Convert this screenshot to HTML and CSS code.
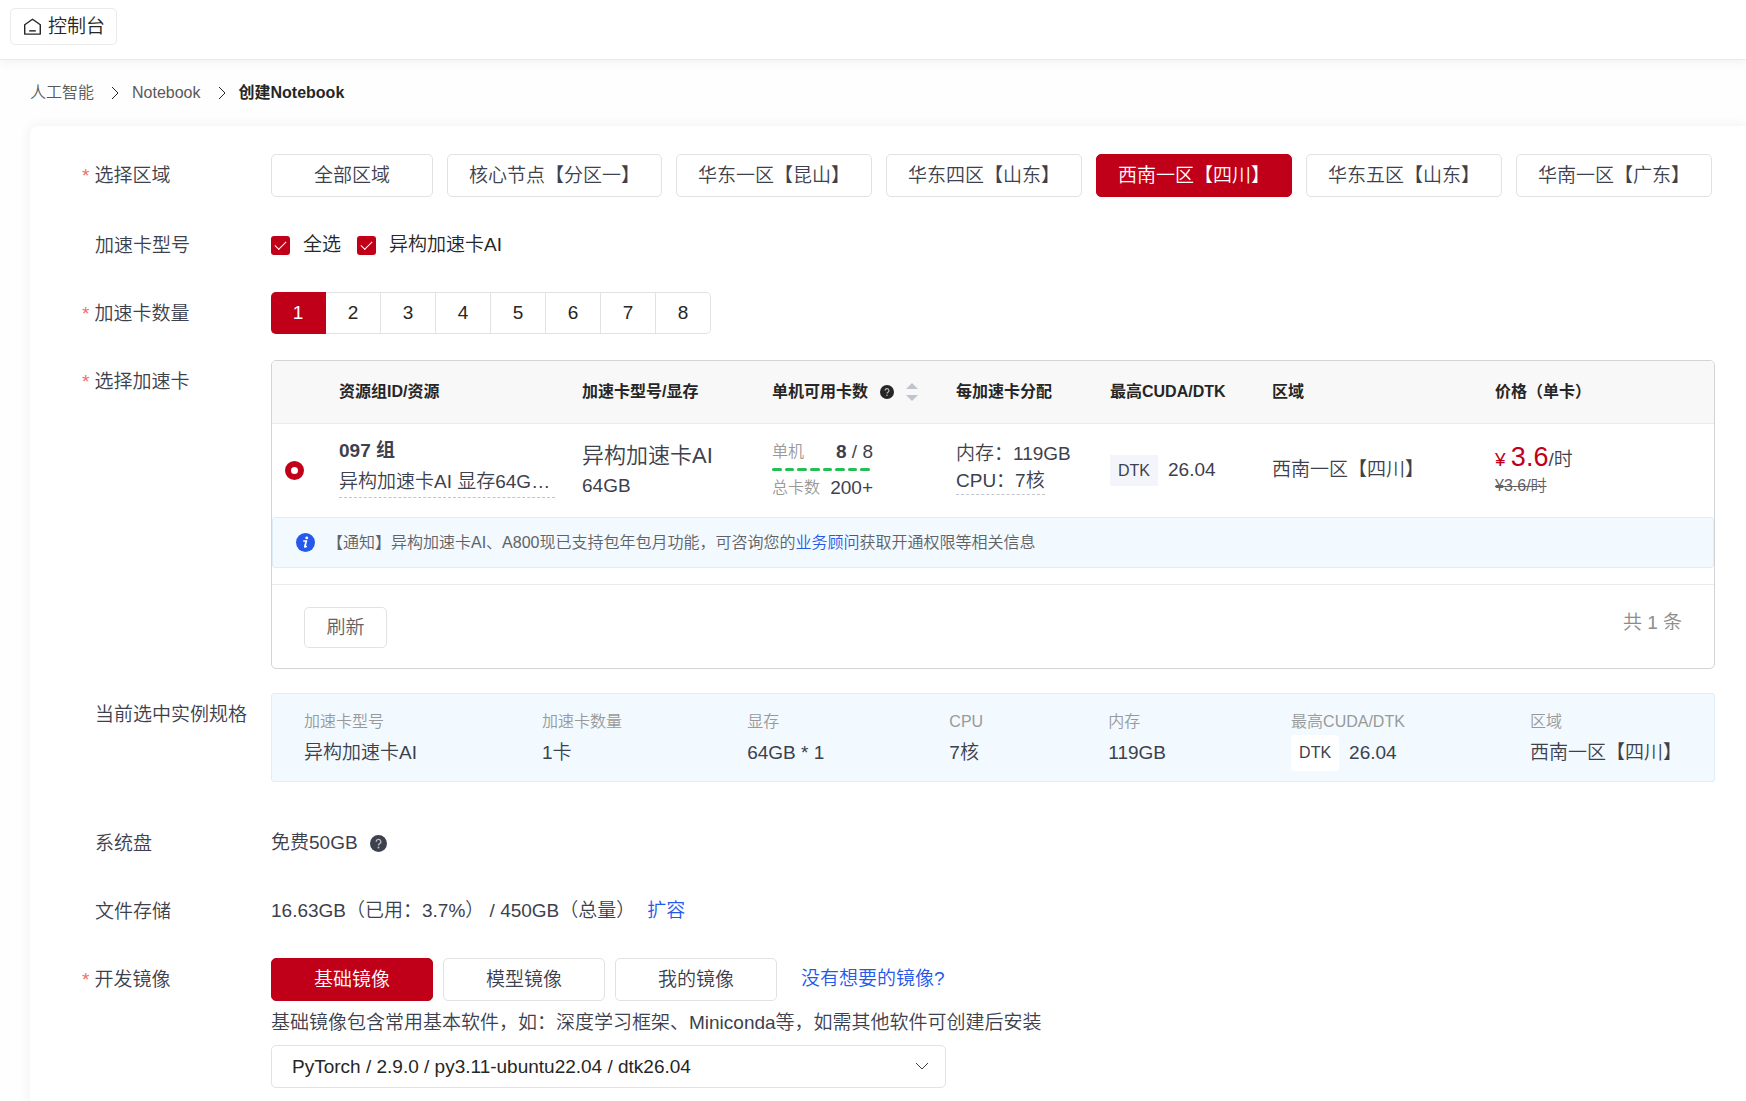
FILE: index.html
```html
<!DOCTYPE html>
<html lang="zh-CN">
<head>
    <meta charset="UTF-8">
    <meta name="viewport" content="width=device-width, initial-scale=1.0">
    <title>创建Notebook</title>
    <link rel="stylesheet" href="styles.css">
</head>
<body>
    <header class="topbar">
        <a href="#" class="console-btn">
            <svg class="icon-home" viewBox="0 0 20 20" fill="none" stroke="currentColor" stroke-width="1.5" stroke-linejoin="round">
                <path d="M1.8 8.2 10 2.4l8.2 5.8v9.8H1.8z"/>
                <path d="M6.5 14.6h7"/>
            </svg>
            控制台
        </a>
    </header>

    <nav class="breadcrumb">
        <a href="#">人工智能</a>
        <svg class="icon-sep" viewBox="0 0 8 14" fill="none" stroke="currentColor"><path d="M1 1l6 6-6 6"/></svg>
        <a href="#">Notebook</a>
        <svg class="icon-sep" viewBox="0 0 8 14" fill="none" stroke="currentColor"><path d="M1 1l6 6-6 6"/></svg>
        <span class="current">创建Notebook</span>
    </nav>

    <main class="card">
        <div class="form-item item-region">
            <div class="label required">选择区域</div>
            <div class="content btn-row region-row">
                <button type="button" class="btn">全部区域</button>
                <button type="button" class="btn">核心节点【分区一】</button>
                <button type="button" class="btn">华东一区【昆山】</button>
                <button type="button" class="btn">华东四区【山东】</button>
                <button type="button" class="btn active">西南一区【四川】</button>
                <button type="button" class="btn">华东五区【山东】</button>
                <button type="button" class="btn">华南一区【广东】</button>
            </div>
        </div>

        <div class="form-item">
            <div class="label">加速卡型号</div>
            <div class="content check-row">
                <label class="check"><input type="checkbox" checked>全选</label>
                <label class="check"><input type="checkbox" checked>异构加速卡AI</label>
            </div>
        </div>

        <div class="form-item">
            <div class="label required">加速卡数量</div>
            <div class="content">
                <div class="count-group">
                    <button type="button" class="active">1</button>
                    <button type="button">2</button>
                    <button type="button">3</button>
                    <button type="button">4</button>
                    <button type="button">5</button>
                    <button type="button">6</button>
                    <button type="button">7</button>
                    <button type="button">8</button>
                </div>
            </div>
        </div>

        <div class="form-item item-table">
            <div class="label required">选择加速卡</div>
            <div class="content table-box">
                <table class="card-table">
                    <colgroup>
                        <col class="col-radio">
                        <col class="col-group">
                        <col class="col-model">
                        <col class="col-avail">
                        <col class="col-alloc">
                        <col class="col-cuda">
                        <col class="col-region">
                        <col>
                    </colgroup>
                    <thead>
                        <tr>
                            <th></th>
                            <th>资源组ID/资源</th>
                            <th>加速卡型号/显存</th>
                            <th>
                                <div class="th-flex">
                                    单机可用卡数
                                    <svg class="icon-help icon-help-sm" viewBox="0 0 16 16">
                                        <circle cx="8" cy="8" r="8" fill="currentColor"/>
                                        <path d="M5.8 6.3a2.2 2.2 0 1 1 3.3 1.9c-.8.4-1.1.8-1.1 1.6" fill="none" stroke="#bbb" stroke-width="1.3"/>
                                        <circle cx="8" cy="11.8" r=".9" fill="#bbb"/>
                                    </svg>
                                    <svg class="icon-sort" viewBox="0 0 12 18" fill="#c0c4cc">
                                        <path d="M6 0l6 6H0zM6 18l-6-6h12z"/>
                                    </svg>
                                </div>
                            </th>
                            <th>每加速卡分配</th>
                            <th>最高CUDA/DTK</th>
                            <th>区域</th>
                            <th>价格（单卡）</th>
                        </tr>
                    </thead>
                    <tbody>
                        <tr>
                            <td class="cell-radio"><input type="radio" name="group" aria-label="097 组" checked></td>
                            <td class="cell-lines">
                                <div class="group-name">097 组</div>
                                <div class="group-desc">异构加速卡AI 显存64G…</div>
                            </td>
                            <td>
                                <div class="model-name">异构加速卡AI</div>
                                <div class="model-mem">64GB</div>
                            </td>
                            <td>
                                <div class="avail">
                                    <div class="avail-line"><span>单机</span><div><b>8</b> / 8</div></div>
                                    <div class="avail-bar"><i></i><i></i><i></i><i></i><i></i><i></i><i></i><i></i></div>
                                    <div class="avail-line"><span>总卡数</span><div>200+</div></div>
                                </div>
                            </td>
                            <td class="cell-lines">
                                <div class="alloc-line">内存：119GB</div>
                                <div class="alloc-line dashed">CPU：7核</div>
                            </td>
                            <td><div class="dtk"><span class="tag">DTK</span>26.04</div></td>
                            <td>西南一区【四川】</td>
                            <td class="cell-price">
                                <div class="price"><span class="yen">¥</span> <span class="num">3.6</span>/时</div>
                                <del class="price-old">¥3.6/时</del>
                            </td>
                        </tr>
                    </tbody>
                </table>
                <div class="notice">
                    <svg class="icon-info" viewBox="0 0 20 20">
                        <circle cx="10" cy="10" r="10" fill="#2459eb"/>
                        <circle cx="11.3" cy="5.2" r="1.5" fill="#fff"/>
                        <path d="M7.6 8.4h3.2L9.3 14.2q-.2 1.2 2 -.4" fill="none" stroke="#fff" stroke-width="1.8"/>
                    </svg>
                    <p>【通知】异构加速卡AI、A800现已支持包年包月功能，可咨询您的<a href="#">业务顾问</a>获取开通权限等相关信息</p>
                </div>
                <div class="table-footer">
                    <button type="button" class="btn btn-refresh">刷新</button>
                    <span class="total">共 1 条</span>
                </div>
            </div>
        </div>

        <div class="form-item item-spec">
            <div class="label">当前选中实例规格</div>
            <dl class="content spec">
                <div><dt>加速卡型号</dt><dd>异构加速卡AI</dd></div>
                <div><dt>加速卡数量</dt><dd>1卡</dd></div>
                <div><dt>显存</dt><dd>64GB * 1</dd></div>
                <div><dt>CPU</dt><dd>7核</dd></div>
                <div><dt>内存</dt><dd>119GB</dd></div>
                <div><dt>最高CUDA/DTK</dt><dd class="dtk"><span class="tag">DTK</span>26.04</dd></div>
                <div><dt>区域</dt><dd>西南一区【四川】</dd></div>
            </dl>
        </div>

        <div class="form-item">
            <div class="label">系统盘</div>
            <div class="content text-row">
                <span>免费50GB</span>
                <svg class="icon-help" viewBox="0 0 16 16">
                    <circle cx="8" cy="8" r="8" fill="currentColor"/>
                    <path d="M5.8 6.3a2.2 2.2 0 1 1 3.3 1.9c-.8.4-1.1.8-1.1 1.6" fill="none" stroke="#bbb" stroke-width="1.3"/>
                    <circle cx="8" cy="11.8" r=".9" fill="#bbb"/>
                </svg>
            </div>
        </div>

        <div class="form-item">
            <div class="label">文件存储</div>
            <div class="content text-row">
                <span>16.63GB（已用：3.7%） / 450GB（总量）</span>
                <a href="#">扩容</a>
            </div>
        </div>

        <div class="form-item">
            <div class="label required">开发镜像</div>
            <div class="content">
                <div class="btn-row image-row">
                    <button type="button" class="btn active">基础镜像</button>
                    <button type="button" class="btn">模型镜像</button>
                    <button type="button" class="btn">我的镜像</button>
                    <a href="#">没有想要的镜像?</a>
                </div>
                <p class="tip">基础镜像包含常用基本软件，如：深度学习框架、Miniconda等，如需其他软件可创建后安装</p>
                <div class="select-wrap">
                    <select aria-label="基础镜像">
                        <option>PyTorch / 2.9.0 / py3.11-ubuntu22.04 / dtk26.04</option>
                    </select>
                    <svg class="icon-arrow" viewBox="0 0 14 8" fill="none" stroke="currentColor"><path d="M1 1l6 6 6-6"/></svg>
                </div>
            </div>
        </div>
    </main>
</body>
</html>
```

FILE: styles.css
```css
* {
    margin: 0;
    padding: 0;
    box-sizing: border-box;
}

body {
    font-family: "Liberation Sans", "Noto Sans CJK SC", sans-serif;
    font-size: 19px;
    font-weight: 350;
    line-height: 42px;
    color: #3d414d;
    background-color: #fefefe;
}

a {
    color: #2459eb;
    text-decoration: none;
}

b {
    font-weight: bold;
}

button,
select {
    font: inherit;
    color: inherit;
}

button {
    cursor: pointer;
}

/* Top bar */
.topbar {
    height: 60px;
    padding: 8px 10px;
    background-color: #fff;
    border-bottom: 1px solid #ebebeb;
    box-shadow: 0 2px 10px rgba(0, 0, 0, 0.06);
}

.console-btn {
    display: inline-flex;
    align-items: center;
    gap: 6px;
    height: 37px;
    padding: 0 11px 0 12px;
    border: 1px solid #ebebeb;
    border-radius: 5px;
    color: #262626;
}

.icon-home {
    width: 19px;
    height: 19px;
}

/* Breadcrumb */
.breadcrumb {
    display: flex;
    align-items: center;
    gap: 13px;
    padding: 22px 30px;
    font-size: 16px;
    line-height: 22px;
    color: #262626;
}

.breadcrumb a {
    color: #595959;
}

.breadcrumb .current {
    font-weight: bold;
}

.icon-sep {
    width: 8px;
    height: 14px;
    margin-left: 4px;
}

/* Form card */
.card {
    margin-left: 30px;
    padding: 28px 31px 14px 51px;
    min-height: calc(100vh - 126px);
    background-color: #fff;
    border-top-left-radius: 8px;
    box-shadow: 0 0 12px rgba(60, 60, 120, 0.08);
}

.form-item {
    display: flex;
    margin-bottom: 26px;
}

.item-region {
    margin-bottom: 27px;
}

.item-table {
    margin-bottom: 24px;
}

.item-spec {
    margin-bottom: 40px;
}

.form-item:last-child {
    margin-bottom: 0;
}

.label {
    flex: 0 0 190px;
    height: 42px;
    padding-left: 14px;
    line-height: 44px;
}

.label.required {
    padding-left: 1px;
}

.label.required::before {
    content: "*";
    margin-right: 5px;
    color: #f56c6c;
}

.content {
    flex: 1;
    min-width: 0;
}

/* Buttons */
.btn-row {
    display: flex;
    flex-wrap: wrap;
}

.region-row {
    gap: 14px;
}

.image-row {
    gap: 10px;
}

.image-row a {
    margin-left: 14px;
}

.btn {
    min-width: 162px;
    height: 43px;
    padding: 0 21px;
    line-height: 38px;
    white-space: nowrap;
    background-color: #fff;
    border: 1px solid #e2e2e4;
    border-radius: 5px;
}

.btn.active {
    color: #fff;
    background-color: #c00018;
    border-color: #c00018;
}

/* Checkboxes */
.check-row {
    display: flex;
    gap: 16px;
}

.check {
    display: flex;
    align-items: center;
    gap: 13px;
    color: #262626;
}

.check input {
    appearance: none;
    display: grid;
    place-items: center;
    width: 19px;
    height: 19px;
    background-color: #c00018;
    border-radius: 3px;
}

.check input::after {
    content: "";
    width: 10px;
    height: 5px;
    margin-bottom: 3px;
    border: solid #fff;
    border-width: 0 0 1px 1px;
    transform: rotate(-45deg);
}

/* Card count */
.count-group {
    display: inline-flex;
    vertical-align: top;
}

.count-group button {
    width: 55px;
    height: 42px;
    line-height: 40px;
    color: #262626;
    background-color: #fff;
    border: 1px solid #e2e2e4;
    border-left-width: 0;
}

.count-group button.active {
    color: #fff;
    background-color: #c00018;
    border-color: #c00018;
    border-radius: 5px 0 0 5px;
}

.count-group button:last-child {
    border-radius: 0 5px 5px 0;
}

/* Accelerator table */
.table-box {
    border: 1px solid #d4d4d4;
    border-radius: 5px;
    overflow: hidden;
}

.card-table {
    width: 100%;
    table-layout: fixed;
    border-collapse: collapse;
    line-height: 28px;
}

.col-radio { width: 57px; }
.col-group { width: 243px; }
.col-model { width: 190px; }
.col-avail { width: 184px; }
.col-alloc { width: 154px; }
.col-cuda { width: 162px; }
.col-region { width: 223px; }

.card-table th,
.card-table td {
    padding: 0 10px;
    text-align: left;
    white-space: nowrap;
}

.card-table th {
    height: 62px;
    font-size: 16px;
    color: #262626;
    background-color: #f8f8f8;
    border-bottom: 1px solid #ebebeb;
}

.card-table td {
    height: 94px;
}

.th-flex {
    display: flex;
    align-items: center;
    gap: 12px;
}

.icon-help {
    width: 17px;
    height: 17px;
}

.icon-help-sm {
    width: 14px;
    height: 14px;
}

.icon-sort {
    width: 12px;
    height: 18px;
}

.card-table .cell-radio {
    padding-left: 13px;
}

.card-table .cell-lines {
    padding-bottom: 6px;
}

.card-table .cell-price {
    padding-bottom: 2px;
}

.cell-radio input {
    appearance: none;
    display: block;
    width: 19px;
    height: 19px;
    background-color: #fff;
    border: 6px solid #c00018;
    border-radius: 50%;
}

.group-name {
    font-weight: bold;
}

.group-desc {
    width: 216px;
    height: 33px;
    line-height: 34px;
    border-bottom: 1px dashed #c0c4cc;
}

.model-name {
    font-size: 22px;
    line-height: 32px;
}

.avail {
    width: 101px;
}

.avail-line {
    display: flex;
    justify-content: space-between;
}

.avail-line span {
    font-size: 16px;
    color: #999;
}

.avail-bar {
    display: flex;
    gap: 3px;
    width: 98px;
    margin: 2px 0 3px;
}

.avail-bar i {
    flex: 1;
    height: 3px;
    background-color: #22bf52;
    border-radius: 2px;
}

.alloc-line {
    width: max-content;
    line-height: 27px;
}

.dashed {
    border-bottom: 1px dashed #c0c4cc;
}

.dtk {
    display: flex;
    align-items: center;
    gap: 10px;
}

.tag {
    padding: 0 8px;
    font-size: 16px;
    line-height: 31px;
    background-color: #f4f5fa;
}

.price {
    line-height: 30px;
}

.price .yen {
    color: #c00018;
}

.price .num {
    font-size: 27px;
    color: #c00018;
}

.price-old {
    display: block;
    font-size: 16px;
    line-height: 22px;
    color: #606266;
}

.notice {
    display: flex;
    align-items: center;
    gap: 12px;
    height: 51px;
    padding: 0 23px;
    font-size: 16px;
    color: #606266;
    background-color: #f2f9ff;
    border: 1px solid #dceefb;
    border-radius: 3px;
}

.icon-info {
    flex: none;
    width: 19px;
    height: 19px;
}

.table-footer {
    display: flex;
    justify-content: space-between;
    margin-top: 16px;
    padding: 22px 32px 20px;
    border-top: 1px solid #ebebeb;
}

.btn-refresh {
    min-width: 83px;
    height: 41px;
    line-height: 36px;
    color: #606266;
}

.total {
    line-height: 32px;
    color: #8c8c8c;
}

/* Selected spec */
.spec {
    display: flex;
    justify-content: space-between;
    height: 89px;
    padding: 14px 32px 0;
    background-color: #f2f9ff;
    border: 1px solid #dceefb;
    border-radius: 3px;
}

.spec dt {
    font-size: 16px;
    line-height: 27px;
    color: #999;
}

.spec dd {
    line-height: 36px;
}

.spec .tag {
    line-height: 36px;
    background-color: #fff;
    border-radius: 4px;
}

.text-row {
    display: flex;
    align-items: center;
    gap: 12px;
    height: 42px;
    line-height: 44px;
}

/* Image select */
.tip {
    line-height: 44px;
}

.select-wrap {
    position: relative;
    width: 675px;
    max-width: 100%;
    height: 43px;
}

.select-wrap select {
    appearance: none;
    display: block;
    width: 100%;
    height: 43px;
    padding: 0 40px 0 20px;
    color: #262626;
    background-color: #fff;
    border: 1px solid #e2e2e4;
    border-radius: 5px;
}

.icon-arrow {
    position: absolute;
    top: 17px;
    right: 17px;
    width: 14px;
    height: 8px;
    pointer-events: none;
}
```
